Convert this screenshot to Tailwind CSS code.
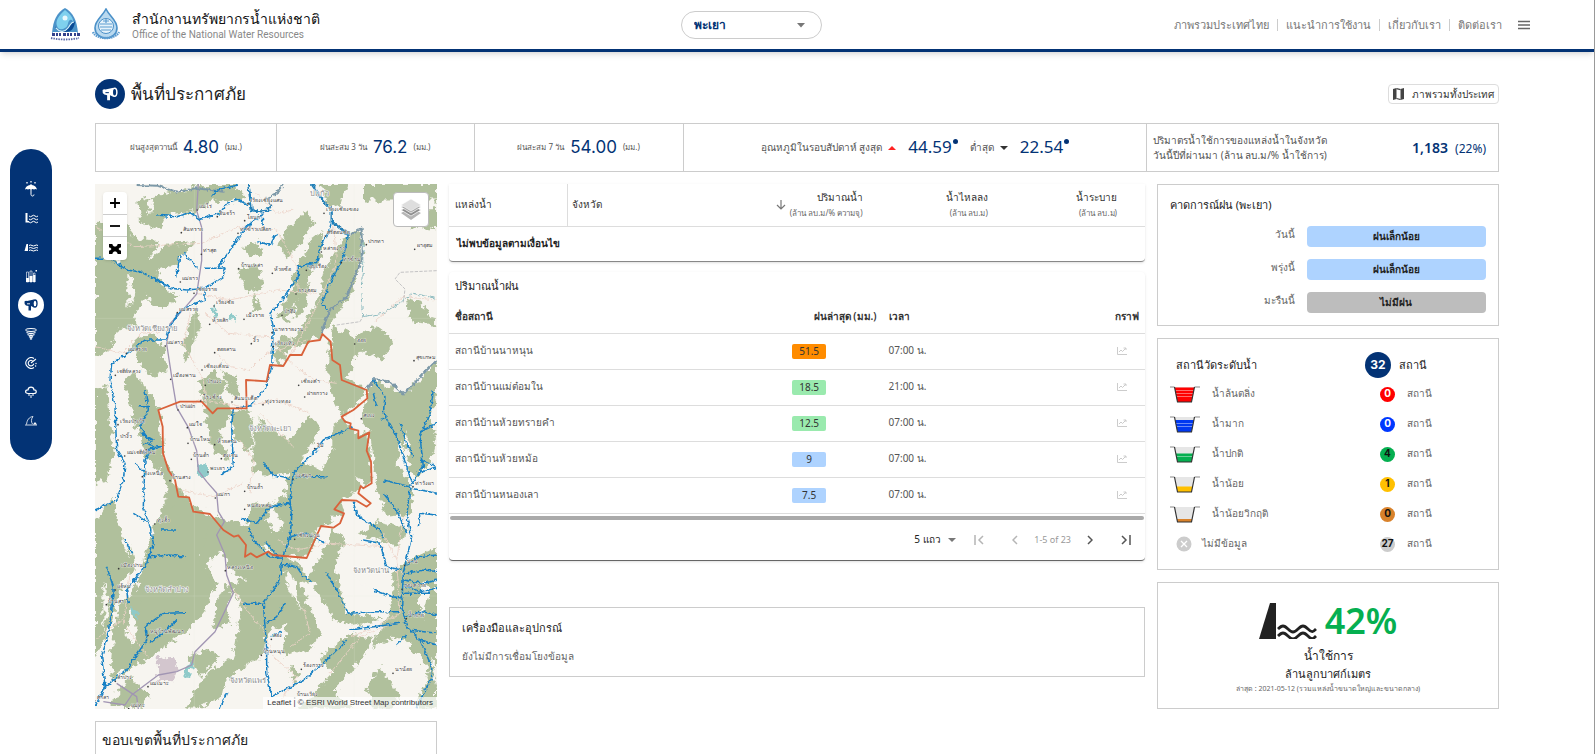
<!DOCTYPE html>
<html lang="th">
<head>
  <meta charset="UTF-8">
  <meta name="viewport" content="width=device-width, initial-scale=1.0">
  <title>สำนักงานทรัพยากรน้ำแห่งชาติ</title>
  <script src="https://cdn.jsdelivr.net/npm/@tailwindcss/browser@4"></script>
</head>
<body class="min-h-screen overflow-x-hidden border-r border-[#999] bg-white font-['Noto_Sans',sans-serif] text-xs text-[#333]">

  <!-- Header -->
  <header class="grid h-[52px] grid-cols-[631fr_142fr_708fr] items-center border-b-3 border-[#033375] pr-16 pl-[50px] shadow-md">
    <div class="flex items-center gap-3">
      <svg class="h-[33px] w-[30px]" viewBox="0 0 30 33">
        <path d="M15 0C7 4 3 13 2 25h26C27 13 23 4 15 0z" fill="#4c93c9"/>
        <path d="M15 2c-6 5-10 11-8 16 1 4 5 4 8 2 4-2 2-6 5-8 2-1 3 1 3 3 1-5-3-9-8-13z" fill="#7fd0ee"/>
        <path d="M5 18c2 6 9 7 13 2 3-3 4-7 7-6-1 7-4 10-10 10-6 0-9-2-10-6z" fill="#0a4a94"/>
        <path d="M6 20c4 5 9 4 12 0 3-4 3-6 6-6" fill="none" stroke="#d8f3fc" stroke-width="1.200"/>
        <circle cx="15" cy="10" r="2.500" fill="#e8f8fd"/>
        <path d="M3 24h24l2 4H1z" fill="#fff"/>
        <path d="M2 26.500h3m1 0h2m1 0h2m2 0h3m1 0h2m1 0h2m2 0h2m1 0h3" stroke="#33418c" stroke-width="3"/>
        <path d="M1 30c9 2 19 2 28 0" stroke="#5a68a8" stroke-width="1.800" stroke-dasharray="1.500 1" fill="none"/>
      </svg>
      <svg class="h-[33px] w-[28px]" viewBox="0 0 28 33">
        <path d="M14 1C10 9 3 12 3 20a11 10 0 0 0 22 0C25 12 18 9 14 1z" fill="#b9d9ef" stroke="#4a90c8" stroke-width="1.6"/>
        <circle cx="14" cy="18" r="7.500" fill="#e5f2fa" stroke="#4a90c8"/>
        <path d="M8 16h12M8 19h12M9 22h10M14 11v4m-3-2h6" stroke="#5a9bd0" stroke-width="1.2"/>
        <path d="M1 24c4 8 22 8 26 0" fill="none" stroke="#5a9bd0" stroke-width="2.500" stroke-dasharray="1.500 .7"/>
      </svg>
      <div>
        <h1 class="text-sm leading-5 text-[#111]">สำนักงานทรัพยากรน้ำแห่งชาติ</h1>
        <p class="font-['Roboto'] text-[10px] leading-3 text-[#888]">Office of the National Water Resources</p>
      </div>
    </div>
    <div class="relative">
      <select aria-label="จังหวัด" class="h-7 w-full appearance-none rounded-full border border-[#ccc] bg-white px-3 text-xs leading-5 font-semibold text-[#033375]">
        <option>พะเยา</option>
      </select>
      <svg class="pointer-events-none absolute top-3 right-4 h-[5px] w-2.5" viewBox="0 0 10 5"><path d="M1 0h8L5 4.500z" fill="#777"/></svg>
    </div>
    <nav class="flex items-center justify-end text-[11px] text-[#777]">
      <a href="#" class="border-r border-[#ccc] pr-2 leading-3">ภาพรวมประเทศไทย</a>
      <a href="#" class="border-r border-[#ccc] px-2 leading-3">แนะนำการใช้งาน</a>
      <a href="#" class="border-r border-[#ccc] px-2 leading-3">เกี่ยวกับเรา</a>
      <a href="#" class="pl-2 leading-3">ติดต่อเรา</a>
      <button aria-label="เมนู" class="ml-4">
        <svg class="h-3 w-3" viewBox="0 0 12 12"><path d="M0 2.500h12M0 6h12M0 9.500h12" stroke="#666" stroke-width="1.500"/></svg>
      </button>
    </nav>
  </header>

  <!-- Side menu -->
  <nav class="fixed top-[149px] left-2.5 z-10 flex w-[42px] flex-col items-center rounded-full bg-[#033375] py-[25px] text-white">
    <a href="#" aria-label="ฝน" class="flex h-[29px] items-center">
      <svg class="h-4 w-3.5" viewBox="0 0 14 16"><path d="M1 8.500C2 5 4.500 4 7 4s5 1 6 4.500c-1-.8-2-.8-3 0-1-.8-2-.8-3 0-1-.8-2-.8-3 0-1-.8-2-.8-3 0z" fill="currentColor"/><path d="M7 3v10.500c0 2 3 2 3 0" fill="none" stroke="currentColor"/><path d="M3 1v1.500M7 0v1.500M11 1v1.500" stroke="currentColor" stroke-width="1.300"/></svg>
    </a>
    <a href="#" aria-label="ระดับน้ำ" class="flex h-[29px] items-center">
      <svg class="h-3 w-3.5" viewBox="0 0 14 12"><path d="M1.500 1v9.500H5V9H3.500V1z" fill="currentColor"/><path d="M5 4q1.500 1.500 3 0t3 0 3 0M5 7q1.500 1.500 3 0t3 0 3 0M5 10q1.500 1.500 3 0t3 0 3 0" fill="none" stroke="currentColor"/></svg>
    </a>
    <a href="#" aria-label="เขื่อน" class="flex h-[29px] items-center">
      <svg class="h-3 w-3.5" viewBox="0 0 14 12"><path d="M2.500 3H4v7H.5z" fill="currentColor"/><path d="M5 4.500q1.500-1 3 0t3 0 3 0M5 7q1.500-1 3 0t3 0 3 0M5 9.500q1.500-1 3 0t3 0 3 0" fill="none" stroke="currentColor"/></svg>
    </a>
    <a href="#" aria-label="สถิติ" class="flex h-[29px] items-center">
      <svg class="h-3.5 w-3" viewBox="0 0 12 14"><path d="M1.500 3v10h2V3zM5 2v11h2V2zM8.500 4v9h1.500V4z" fill="none" stroke="currentColor" stroke-width=".6"/><path d="M1 9h3v4H1zM4.500 7h3v6h-3zM8.200 6h2.200v7H8.200zM10.500 1H12v1.500h-1.500z" fill="currentColor"/></svg>
    </a>
    <a href="#" aria-label="พื้นที่ประกาศภัย" class="flex h-[29px] items-center">
      <span class="flex size-[26px] items-center justify-center rounded-full bg-white text-[#033375]">
        <svg class="h-3 w-3.5" viewBox="0 0 14 12"><path d="M.5 2.500Q1.500 1.500 3 2l7-1.500v8L7 7v4.500H4.500V7L2 6.500Q0 5 .5 2.500z" fill="currentColor"/><ellipse cx="11" cy="4.500" rx="2" ry="3.500" fill="#fff" stroke="currentColor" stroke-width="1.300"/><path d="M3 4.800h3" stroke="#fff" stroke-width=".9"/></svg>
      </span>
    </a>
    <a href="#" aria-label="พายุ" class="flex h-[29px] items-center">
      <svg class="h-3 w-3" viewBox="0 0 12 12"><ellipse cx="6" cy="2" rx="5.500" ry="1.500" fill="none" stroke="currentColor"/><path d="M1.500 4.500q4.500 2 9 0M2.500 6.500q3.500 2 7 0M4 8.500q2 1.500 4 0M5 10.500q1 1 2 0" fill="none" stroke="currentColor" stroke-width="1.300"/></svg>
    </a>
    <a href="#" aria-label="เรดาร์" class="flex h-[29px] items-center">
      <svg class="size-3" viewBox="0 0 12 12"><path d="M9 1.500a5.300 5.300 0 1 0 0 9M7.500 3.700a2.800 2.800 0 1 0 1.300 3M6 6l5-4" fill="none" stroke="currentColor" stroke-width="1.100"/><circle cx="11" cy="6.500" r=".7" fill="currentColor"/><circle cx="10.600" cy="9" r=".7" fill="currentColor"/></svg>
    </a>
    <a href="#" aria-label="เมฆ" class="flex h-[29px] items-center">
      <svg class="size-3" viewBox="0 0 12 12"><path d="M3 7.500C-.3 7.500 0 3.700 3 3.800 3.500.3 8.500.3 9 3.800c3 0 3 3.700 0 3.700z" fill="none" stroke="currentColor" stroke-width="1.200"/><path d="M4 8v2M6 9v3M8 8v2" stroke="currentColor"/></svg>
    </a>
    <a href="#" aria-label="คลื่น" class="flex h-[29px] items-center">
      <svg class="size-3" viewBox="0 0 12 12"><path d="M0 10h12M1.500 9.500C2 5 4 2 8 1.500 6 4 6 7 7.500 9" fill="none" stroke="currentColor" stroke-width=".8"/><path d="M8 9.500l2-2.500 2 2.500z" fill="currentColor"/></svg>
    </a>
  </nav>

  <main class="px-[95px] pt-[27px]">
    <!-- Title row -->
    <div class="flex h-[30px] items-center justify-between">
      <h2 class="flex items-center gap-1.5 text-[17px] leading-6 text-[#222]">
        <span class="flex size-[30px] items-center justify-center rounded-full bg-[#033375] text-white">
          <svg class="h-3.5 w-4" viewBox="0 0 14 12"><path d="M.5 2.500Q1.500 1.500 3 2l7-1.500v8L7 7v4.500H4.500V7L2 6.500Q0 5 .5 2.500z" fill="currentColor"/><ellipse cx="11" cy="4.500" rx="2" ry="3.500" fill="#033375" stroke="currentColor" stroke-width="1.300"/><path d="M3 4.800h3" stroke="#033375" stroke-width=".9"/></svg>
        </span>
        พื้นที่ประกาศภัย
      </h2>
      <button class="flex h-5 items-center gap-2 rounded-sm border border-[#ddd] px-1 text-[10px] leading-4 text-[#333]">
        <svg class="h-3 w-[11px]" viewBox="0 0 11 12"><path d="M0 1l3.500-1v11L0 12zM7.500 1L11 0v11l-3.500 1z" fill="#444"/><path d="M3.500.7l4 1M3.500 10.500l4 1" stroke="#444" stroke-width="1.200"/></svg>
        ภาพรวมทั้งประเทศ
      </button>
    </div>

    <!-- Summary row -->
    <section class="mt-3.5 grid h-[49px] grid-cols-[181fr_198fr_209fr_464fr_351fr] divide-x divide-[#ccc] border border-[#ccc] text-[8px] text-[#555]">
      <div class="flex items-center justify-center gap-1.5">ฝนสูงสุดวานนี้ <b class="font-['Inter'] text-[17px] font-normal text-[#033375]">4.80</b> (มม.)</div>
      <div class="flex items-center justify-center gap-1.5">ฝนสะสม 3 วัน <b class="font-['Inter'] text-[17px] font-normal text-[#033375]">76.2</b> (มม.)</div>
      <div class="flex items-center justify-center gap-1.5">ฝนสะสม 7 วัน <b class="font-['Inter'] text-[17px] font-normal text-[#033375]">54.00</b> (มม.)</div>
      <div class="flex items-center justify-center gap-1.5 text-[10px]">
        อุณหภูมิในรอบสัปดาห์ สูงสุด
        <svg class="h-1 w-2" viewBox="0 0 8 4"><path d="M0 4h8L4 0z" fill="#f22"/></svg>
        <span class="ml-1.5 flex text-[17px] text-[#033375]">44.59<i class="mt-[3px] ml-px size-[5px] rounded-full bg-[#033375]"></i></span>
        <span class="ml-1.5">ต่ำสุด</span>
        <svg class="h-1 w-2" viewBox="0 0 8 4"><path d="M0 0h8L4 4z" fill="#333"/></svg>
        <span class="ml-1.5 flex text-[17px] text-[#033375]">22.54<i class="mt-[3px] ml-px size-[5px] rounded-full bg-[#033375]"></i></span>
      </div>
      <div class="flex items-center justify-between pr-3 pl-1.5">
        <p class="text-[10px] leading-[15px]">ปริมาตรน้ำใช้การของแหล่งน้ำในจังหวัด<br>วันนี้ปีที่ผ่านมา (ล้าน ลบ.ม/% น้ำใช้การ)</p>
        <p class="text-xs text-[#033375]"><b class="mr-1 text-sm font-semibold">1,183</b> (22%)</p>
      </div>
    </section>

    <div class="mt-3 grid grid-cols-4 gap-3">
      <!-- Left column -->
      <div class="flex flex-col gap-3">
        <div class="relative h-[525px] overflow-hidden bg-[#f7f5f0]">
          <svg class="size-full" viewBox="15 12 1026 1575" preserveAspectRatio="xMidYMid slice">
            <defs>
              <filter id="rough" x="0" y="0" width="100%" height="100%"><feTurbulence type="fractalNoise" baseFrequency=".05" numOctaves="4" seed="4"/><feDisplacementMap in="SourceGraphic" scale="34" xChannelSelector="R" yChannelSelector="G"/></filter>
              <filter id="wiggle" x="0" y="0" width="100%" height="100%"><feTurbulence type="fractalNoise" baseFrequency=".09" numOctaves="3" seed="9"/><feDisplacementMap in="SourceGraphic" scale="14" xChannelSelector="R" yChannelSelector="G"/></filter>
            </defs>
            <rect x="15" y="12" width="1026" height="1575" fill="#f7f5f0"/>
            <g filter="url(#rough)">
              <g fill="#b0c09c" transform="translate(-270 0) scale(1 1.021)">
                <path d="M415 60l65-15 120-25 40-8h60l40 38-50 15-50-5-50 35-90 5-20 50-60-30zM285 130l95-10 20 50 80 10-40 60 60-50 90-5-70 65-50 20 30 60 40 10-60 40-40-40-40 60 20 30-70 10-20 60-45 20z"/>
                <path d="M285 620l35-20 10 120 15 80-25 80-35 20zM375 600l25-40 30 40 50 80 10 120 40 100 30 30 40 50-40 120-20 80-100 80 40 30 60-20 30 60-140 50-30 50-70 40 10-140 20-90 40-20 30-100 20-70 50-120-30-80-40-50-30-100zM400 470l50-20 40 40 10 70-40 20-40-30zM285 1000l50-60 40 80 30 120-40 40-30 120-50 100z"/>
                <path d="M530 930l110 55 60 60 35 55 55 5 50 5-5 40-40 80-15 70-30-70-50-60-50-40-50-30 40 100-20 60-60 70-80 50-60 20-10-120 40-160zM600 590l40-30 40 40-20 40 40 40-40 70 30 80-50-30-20-80-10-60zM695 680l45-10 20 50-10 80-50-40zM550 480l40-110 10 50-20 70-25 50zM670 560l40 20 10 60-30-10z"/>
                <path d="M715 260l65-10 10 60-50 20zM860 140l60-50 20 40-40 60-40 40-20-30zM890 260l40-80 40-30-10 80-60 110-40 80-30-20 40-70zM730 200l40-20 20 30-40 20zM840 460l40 10-40 70-20-20zM760 330l20 50-20 10z"/>
                <path d="M970 270l60-100 50-20 10 70-40 120-30 40-30 50-30 25-40 25-60 20 40-60 40-60 20-50zM1095 12h216v48h-216zM960 12h80l-20 60-30 10zM1260 80h51v65l-80-10zM1215 345l45 15 51 70-71-10zM1000 430l60 30 70-30 50 40-30 60-70-30-40 80 60 35-30 50-45 25-25-50-20-80 10-60z"/>
                <path d="M1115 590l100 35 96-85v80l-21 80 21 50-21 80-50 50-40-120-10 80 40 50 10 90-80 10-30-90-20-160-30-40 20-60zM900 330l30-30-20 90-30 20z"/>
                <path d="M1030 700l45 50 30-10 10 150-40 20-55 30 10 40-70 40-40 90-80-5-70-45-30-50 20-60 40 10 50-30 20-70-70 10-40-20v-90l20-60 50 40 40 20 60-70 30 40-60 100 60 20 40-60v-70z"/>
                <path d="M635 985l115 35 50 70 40 10 60 30 20 40 40-60 40-80 40 30-40 70 40 140 110 20-90 20-60-20-60-100-40-10 60 150-20 40-90 30 10-100-60 30-10 70-90 50-50 80-60 23h-30l60-103 80-50 20-120-30-80 10 100-60 20 10-100-50-100z"/>
                <path d="M960 1400l100-70 60 20-60 90-60 60 60 53H900l100-103zM1180 1150l80-50 51-20v473h-61l40-113-50-60-40-40-80 30 60-130zM1100 1490l40-60 60 80-20 43h-60zM1070 1040l60-40 90 20-20 60-60-20zM870 1430l30 20-20 30z"/>
                <path d="M330 1540l60-80 60 60-30 33zM560 1400l60-20 40 20-60 60zM480 1380l-90 60-30-20 60-50z"/>
              </g>
              <g fill="#f7f5f0" transform="translate(-270 0) scale(1 1.021)">
                <path d="M670 1090l20 60 50 20-60 20-50 70 20-60-30-80zM345 960l20-100 20 100 5 150-20-40zM450 880l30-40 20 60-30 90-20-20zM390 1250l20 60-10 60-20-40zM310 1180l20 70-20 80zM820 950l30 70-30 20-20-40zM940 800l30-20 10 60-30 10zM850 1150l20 60 30 50-20-100zM1060 1050l30 60 30 90-40-10-30-80zM600 960l40 15-20 10z"/>
                <path d="M1070 870l30 20-20 30zM1215 740l20 60-20 30zM385 260l20 80-20 40zM440 60l20-5-10 50zM1270 1180l20 20-20 90-15-60zM1290 1400l21 30v60zM340 200l40 20-30 20zM700 1200l20 60-30 60-10-60z"/>
              </g>
              <path d="M200 1432l50-5 12 40-20 40-40-10z" fill="#d3c6ce"/>
              <g fill="#8fcac9"><path d="M325 850l20 0 12 25-18 15-18-12zM290 1455l18-10-8 45-18 0zM120 1280l20 10 8 30-20-20zM430 395l10 30-20-5zM370 380l12 15-2 20-14-12z"/></g>
            </g>
            <!-- Roads -->
            <g fill="none" stroke="#edd3c8" stroke-width="2.500" filter="url(#wiggle)">
              <path d="M15 140l120 60 200-10 110-50 120 10M320 340l100 20 140-30 120 10M345 400l70 60 120 10 70 80M15 500l80 20 60-60 80-10M380 520l40 40 60 10 50-50 120-40M730 130l10 120-60 130-80 150M260 680l80-20 120 20 100-20 100 40M300 400l-20 90 60 110 10 80M560 150l60 110 5 80M610 800l-100-100M850 430l90-80 100 10M270 930l100 20 90-40M410 1200l60 90 50 60 30 80 70 60-60 90M560 1080l60 30 100-20 160 10M940 1010l-20 130 10 160-70 40-80 30M880 1060l60 130M120 1180l-20 150 80 110M720 1480l90-110 100-40M600 1400l60-40-20-80M500 40l60 60 50-10M620 560l50 40 70 10M15 1380l80-60M450 780l40 60-10 100"/>
            </g>
            <path d="M325 12l-5 80 15 50v100l-15 100-30 35-50 55-10 60 20 130 10 60 35 60 25 70 5 60 25 33 30 34 5 56 18 30-23 40 25 60 5 60 20 55-55 115-60 60-10 40-45 20-55 10-80 60-20 30-65-10M80 1510l60 40 5 37" fill="none" stroke="#a195b3" stroke-width="4" stroke-linejoin="round"/>
            <g stroke="#e8ecdf" opacity=".5"><path d="M313 12v1575M793 12v1575M15 415h1026M15 1248h1026"/></g>
            <path d="M1040 272l-110 5-15 20 30 30-5 40M740 435l70-10 10-18" fill="none" stroke="#a9a9ad" stroke-width="2" stroke-dasharray="10 4"/>
            <path d="M820 180l-2 80-5 80 5 70 60-10 50-30 40-30 70 15" fill="none" stroke="#8fbcc0" stroke-width="3" filter="url(#wiggle)"/>
            <!-- Rivers -->
            <g fill="none" stroke-linejoin="round" filter="url(#wiggle)">
              <path d="M140 15l60 2 60 18 60-10 80 10M545 75l-15-20 30-15 20-28M725 125l55 40 35-20v95l-45 110-50 40-20 50-5 20M830 625l25-28 45 8 40 38 60-62 41-41" stroke="#7d99a8" stroke-width="6"/>
              <path d="M475 12l10 78 20 5 30-3 10-17M665 12l25 38 35 40v35l50 40" stroke="#2380b8" stroke-width="7"/>
              <g stroke="#1680c4" stroke-width="4.500">
                <path d="M15 235h45l50 35 40 5 50 25 45 25 45 5 55-5 55-35 5-25-20-5 25-35 30-45 30-40 50-40M200 105l60 5 40-12 30 20 60-18 20-30 30-12 35 17M345 325v35l-45 15-35 25-25 40-12 40h-63l-60 45-40 25-5 50 15 80 5 130 25 40-5 50-20 60-65 30M270 225l-10 65M280 220l45 45M365 50l15-20 65-15M515 100l5 35M505 185l35 10 20-35M345 265h50"/>
                <path d="M725 125l-10 35-25 40-10 50-55 10v30l-55 80-30 30 10 40-5 120-20 70-50 50-45 5-5 55 5 120-40 25M775 165l-15 65-40 80-25 60 17 20M850 600l35 50-5 50 40 70 20 60 25 75M1030 630l-10 70-30 70 10 90-40 60-10 90 15 60-25 110-5 100 15 60 40 40 35 80v35l-45 87M790 740l-90 40-30 40-60 60-10 80 5 50-5 60-25 70-5 60-50 70 5 70 5 60v80l15 70 95-50 70-60 60-60"/>
                <path d="M165 630l10 60-25 50 40 60-25 40-5 140 20 60 10 50-20 60-60 80 5 40M145 680h35M155 760l35 20M160 790l55 10M150 820l60-20M135 850l30 30M130 1000l40 25M210 1050h45M180 1130l60-5 45 7M50 1160l20 60-5 80-15 80-15 50 10 90-30 60M45 1520l65-50 60-90-5-40 55-40 65-2M180 1390l60-50 20-20M105 1080l20 40M455 1015l45 15 40-50 60-10M475 1040l15 40 50 50 35 5M520 850l30 35 50 10M620 890h90M600 1070l50-10 55 30M570 1150l50 10 20 30 25 15M460 1270h60M530 1330l30-20 25-40M525 1085l35 40M390 1587l20-50M545 1370l30-15"/>
                <path d="M790 965l10 40 70 45 10 25M710 1180l30 50 35 70 75-5h80M880 940l40 50 30 70M880 900l80 20M820 1080l50 10 20 70 45 10M780 1350l70-10 80-10M945 1160l40-30 56-5M945 1180l60-10 36 5M940 1200l60 10 41-10M940 1215l50 20 51-10M940 1240h80M850 1230l60 20 30 5M940 1310l60-15 41 10M955 1350l86 10M990 1380l51 15M920 1395l30-30M985 1040l5-40 51 5M965 925l76 15M990 840l50 20M1000 750l41-20M860 680l-10-40M870 720l20-10M930 730l20 60 20 40M980 881l61-20"/>
              </g>
            </g>
            <!-- Province boundary -->
            <path d="M205 690L270 665L335 665L368 700L382 685L430 685L470 685L468 600L530 604L540 555L580 558L600 525L635 525L655 485L690 480L697 462L722 485L727 540L750 555L755 600L830 630L832 655L790 690L755 710L765 725L782 730L780 745L805 752L805 775L838 757L830 812L843 845L845 910L820 925L812 918L805 940L842 970L830 980L800 962L755 960L733 988L762 1000L750 1030L730 1043L693 1038L650 1134L548 1125L535 1115L500 1132L482 1120L465 1130L468 1095L445 1066L432 1070L400 1050L360 1002L310 995L297 952L265 950L255 900L235 870L219 820L218 740Z" fill="none" stroke="#d9623b" stroke-width="5.500" stroke-linejoin="round"/>
            <!-- Town names -->
            <g id="towns" class="font-['Noto_Sans',sans-serif] text-[16px]" fill="#3a3a3a" stroke="#fff" stroke-width="2" paint-order="stroke"></g>
            <g class="font-['Noto_Sans',sans-serif] text-[23px] font-medium" fill="#8b8b8b" stroke="#fff" stroke-width="3" paint-order="stroke">
              <text x="660" y="48">บ่แก้ว</text>
              <text x="112" y="453">จังหวัดเชียงราย</text>
              <text x="478" y="754">จังหวัดพะเยา</text>
              <text x="166" y="1236">จังหวัดลำปาง</text>
              <text x="788" y="1179">จังหวัดน่าน</text>
              <text x="420" y="1510">จังหวัดแพร่</text>
            </g>
          </svg>
          <div class="absolute top-2 left-2 flex w-6 flex-col divide-y divide-[#ccc] rounded-sm bg-white shadow">
            <button aria-label="Zoom in" class="flex h-[23px] items-center justify-center"><svg class="size-2.5" viewBox="0 0 10 10"><path d="M5 0v10M0 5h10" stroke="#000" stroke-width="1.800"/></svg></button>
            <button aria-label="Zoom out" class="flex h-[22px] items-center justify-center"><svg class="size-2.5" viewBox="0 0 10 10"><path d="M0 5h10" stroke="#000" stroke-width="1.800"/></svg></button>
            <button aria-label="Full screen" class="flex h-[23px] items-center justify-center"><svg class="size-3" viewBox="0 0 12 12"><path d="M0 1h3.500v1L5 3.500h2L8.500 2V1H12v3.500h-1L9.500 6 11 7.500h1V11H8.500v-1L7 8.500H5L3.500 10v1H0V7.500h1L2.500 6 1 4.500H0z" fill="#000"/></svg></button>
          </div>
          <button aria-label="Layers" class="absolute top-2 right-2 flex h-[35px] w-9 items-center justify-center rounded border border-[#bbb] bg-white">
            <svg class="h-[23px] w-5" viewBox="0 0 20 23"><path d="M0 15l10 7 10-7-10-5z" fill="#b5b5b5"/><path d="M0 12l10 6 10-6-10-5z" fill="#8f8f8f" stroke="#fff" stroke-width=".7"/><path d="M0 9l10 6 10-6-10-5z" fill="#a8a8a8" stroke="#fff" stroke-width=".7"/><path d="M0 7l10 6 10-6-10-6z" fill="#dedede" stroke="#fff" stroke-width=".5"/></svg>
          </button>
          <p class="absolute right-0 bottom-0 bg-white/70 px-1 font-['Liberation_Sans'] text-[8px] leading-3 text-[#333]"><a href="#">Leaflet</a> | © ESRI World Street Map contributors</p>
        </div>
        <section class="h-24 border border-[#ccc] px-1.5 py-2">
          <h3 class="text-sm leading-5 font-medium text-[#222]">ขอบเขตพื้นที่ประกาศภัย</h3>
        </section>
      </div>

      <!-- Middle column -->
      <div class="col-span-2">
        <div class="rounded-b border-b border-[#888] shadow-sm">
          <table class="w-full table-fixed text-left text-[10px]">
            <colgroup><col class="w-[17%]"><col class="w-[23%]"><col class="w-[20%]"><col class="w-[18%]"><col class="w-[22%]"></colgroup>
            <thead>
              <tr class="h-[42px] border-b border-[#ddd] leading-[15px]">
                <th class="border-r border-[#ddd] px-1.5 font-medium">แหล่งน้ำ</th>
                <th class="px-1 font-medium">จังหวัด</th>
                <th class="pr-1 text-right font-medium">
                  <span class="flex items-center justify-end gap-1">
                    <svg class="size-2.5" viewBox="0 0 10 10"><path d="M5 0v9M1 5l4 4 4-4" fill="none" stroke="#777" stroke-width="1.200"/></svg>
                    <span>ปริมาณน้ำ<br><small class="text-[8px] font-normal text-[#666]">(ล้าน ลบ.ม/% ความจุ)</small></span>
                  </span>
                </th>
                <th class="pr-1 text-right font-medium">น้ำไหลลง<br><small class="text-[8px] font-normal text-[#666]">(ล้าน ลบ.ม)</small></th>
                <th class="pr-7 text-right font-medium">น้ำระบาย<br><small class="text-[8px] font-normal text-[#666]">(ล้าน ลบ.ม)</small></th>
              </tr>
            </thead>
            <tbody>
              <tr class="h-[35px]"><td colspan="5" class="px-2 font-semibold text-[#222]">ไม่พบข้อมูลตามเงื่อนไข</td></tr>
            </tbody>
          </table>
        </div>

        <div class="mt-2.5 rounded border-b border-[#666] shadow">
          <h3 class="px-1.5 pt-1 text-[11px] leading-5 text-[#222]">ปริมาณน้ำฝน</h3>
          <table class="w-full table-fixed text-left text-[10px]">
            <colgroup><col class="w-[46%]"><col class="w-[16%]"><col class="w-[18%]"><col class="w-[20%]"></colgroup>
            <thead>
              <tr class="h-[37px] border-b border-[#ddd] text-[#333]">
                <th class="px-1.5 pt-1 font-semibold">ชื่อสถานี</th>
                <th class="pt-1 pr-1 text-right font-semibold whitespace-nowrap">ฝนล่าสุด (มม.)</th>
                <th class="px-2 pt-1 font-semibold">เวลา</th>
                <th class="px-1.5 pt-1 text-right font-semibold">กราฟ</th>
              </tr>
            </thead>
            <tbody id="stations" class="text-[#555]"></tbody>
          </table>
          <div class="mx-px mt-0.5 h-1 rounded-full bg-[#aaa]"></div>
          <div class="flex h-10 items-center justify-end pr-3.5 text-[#222]">
            <div class="relative">
              <select aria-label="แถวต่อหน้า" class="h-5 w-11 appearance-none bg-transparent text-[10px]"><option>5 แถว</option></select>
              <svg class="pointer-events-none absolute top-2 right-0.5 h-1 w-2" viewBox="0 0 8 4"><path d="M0 0h8L4 4z" fill="#777"/></svg>
            </div>
            <button aria-label="หน้าแรก" class="ml-4"><svg class="h-2.5 w-2.5" viewBox="0 0 10 10"><path d="M1 0v10M9 1L5 5l4 4" fill="none" stroke="#b5b5b5" stroke-width="1.500"/></svg></button>
            <button aria-label="ก่อนหน้า" class="ml-7"><svg class="h-2.5 w-1.5" viewBox="0 0 6 10"><path d="M5 1L1 5l4 4" fill="none" stroke="#b5b5b5" stroke-width="1.500"/></svg></button>
            <span class="mx-4 text-[9px] text-[#999]">1-5 of 23</span>
            <button aria-label="ถัดไป" class="mr-7"><svg class="h-2.5 w-1.5" viewBox="0 0 6 10"><path d="M1 1l4 4-4 4" fill="none" stroke="#555" stroke-width="1.500"/></svg></button>
            <button aria-label="หน้าสุดท้าย"><svg class="h-2.5 w-2.5" viewBox="0 0 10 10"><path d="M9 0v10M1 1l4 4-4 4" fill="none" stroke="#555" stroke-width="1.500"/></svg></button>
          </div>
        </div>

        <section class="mt-[46px] h-[70px] border border-[#ccc] px-3 py-2.5">
          <h3 class="text-[11px] leading-5 text-[#222]">เครื่องมือและอุปกรณ์</h3>
          <p class="mt-2 text-[10px] leading-5 text-[#666]">ยังไม่มีการเชื่อมโยงข้อมูล</p>
        </section>
      </div>

      <!-- Right column -->
      <div class="flex flex-col gap-3">
        <section class="h-[142px] border border-[#ccc] pt-2.5 pr-3 pl-3">
          <h3 class="text-[11px] leading-5 text-[#222]">คาดการณ์ฝน (พะเยา)</h3>
          <dl class="mt-[11px] grid grid-cols-[125fr_180fr] gap-x-3 gap-y-3 text-[10px] leading-[21px]">
            <dt class="h-[21px] text-right leading-4 text-[#666]">วันนี้</dt>
            <dd class="rounded bg-[#aed3ff] text-center font-semibold text-[#222]">ฝนเล็กน้อย</dd>
            <dt class="h-[21px] text-right leading-4 text-[#666]">พรุ่งนี้</dt>
            <dd class="rounded bg-[#aed3ff] text-center font-semibold text-[#222]">ฝนเล็กน้อย</dd>
            <dt class="h-[21px] text-right leading-4 text-[#666]">มะรืนนี้</dt>
            <dd class="rounded bg-[#bdbdbd] text-center font-semibold text-[#222]">ไม่มีฝน</dd>
          </dl>
        </section>

        <section class="h-[232px] border border-[#ccc] pt-3">
          <div class="flex h-7 items-center text-[11px] text-[#222]">
            <h3 class="w-[207px] pl-[18px]">สถานีวัดระดับน้ำ</h3>
            <b class="mr-2 flex size-[26px] items-center justify-center rounded-full bg-[#033375] font-['Inter'] text-xs text-white">32</b>
            <span>สถานี</span>
          </div>
          <ul id="levels" class="text-[10px] text-[#666]"></ul>
        </section>

        <section class="flex h-[127px] flex-col items-center border border-[#ccc] pt-3">
          <div class="flex items-center gap-2">
            <svg class="h-9 w-[58px]" viewBox="0 0 58 36"><path d="M0 36L11 0h6v36z" fill="#222"/><path d="M19 27c4-4 6-4 10 0s6 4 10 0 6-4 10 0 5 3 8 0M19 34c4-4 6-4 10 0s6 4 10 0 6-4 10 0 5 3 8 0" transform="translate(0 -1)" fill="none" stroke="#222" stroke-width="2.800"/></svg>
            <strong class="text-4xl leading-[52px] font-semibold text-[#05af50]">42%</strong>
          </div>
          <p class="text-xs leading-[18px] text-[#222]">น้ำใช้การ</p>
          <p class="text-[11px] leading-[18px] text-[#222]">ล้านลูกบาศก์เมตร</p>
          <p class="text-[7px] leading-3 text-[#666]">ล่าสุด : 2021-05-12 (รวมแหล่งน้ำขนาดใหญ่และขนาดกลาง)</p>
        </section>
      </div>
    </div>
  </main>

  <script>
    const stations = [
      ["สถานีบ้านนาหนุน", "51.5", "07:00 น.", "bg-[#ff8c00]"],
      ["สถานีบ้านแม่ต๋อมใน", "18.5", "21:00 น.", "bg-[#9aeaae]"],
      ["สถานีบ้านห้วยทรายคำ", "12.5", "07:00 น.", "bg-[#9aeaae]"],
      ["สถานีบ้านห้วยหม้อ", "9", "07:00 น.", "bg-[#aed3ff]"],
      ["สถานีบ้านหนองเลา", "7.5", "07:00 น.", "bg-[#aed3ff]"]
    ];
    document.getElementById("stations").innerHTML = stations.map(([name, rain, time, color]) => `
      <tr class="h-9 border-b border-[#ddd]">
        <td class="px-1.5">${name}</td>
        <td><span class="ml-[23px] block h-[15px] w-[34px] rounded-xs text-center leading-[15px] text-[#333] ${color}">${rain}</span></td>
        <td class="px-2">${time}</td>
        <td><svg class="mr-[18px] ml-auto h-2 w-2.5" viewBox="0 0 10 8"><path d="M.5 0v7.500H10M2 5l2-2 1.500 1.500L9 1M6.500 1H9v2" fill="none" stroke="#ccc"/></svg></td>
      </tr>`).join("");

    // [label, count, water colour, water top, badge classes]
    const levels = [
      ["น้ำล้นตลิ่ง", 0, "#ff0000", 1.5, "bg-[#ff0000] text-white"],
      ["น้ำมาก", 0, "#0038f0", 4, "bg-[#0038ff] text-white"],
      ["น้ำปกติ", 4, "#05af50", 7.5, "bg-[#05af50] text-[#111]"],
      ["น้ำน้อย", 1, "#ffc000", 10.5, "bg-[#ffc000] text-[#111]"],
      ["น้ำน้อยวิกฤติ", 0, "#d9822b", 13, "bg-[#d9822b] text-[#111]"],
      ["ไม่มีข้อมูล", 27, "", 0, "bg-[#ccc] text-[#111]"]
    ];
    document.getElementById("levels").innerHTML = levels.map(([label, count, color, top, badge]) => {
      // side walls lean in by 0.2 per unit of depth
      const lean = (top - 1) * 0.2;
      const lines = [4.5, 7.5, 10.5].filter((y) => y > top + 1).map((y) => `M6 ${y}h17`).join("");
      const icon = color
        ? `<svg class="mr-3 h-[17px] w-[30px]" viewBox="0 0 30 17">
            <path d="M4.500 1h20l-3 15h-14z" fill="#e6e6e6"/>
            <path d="M${4.5 + lean} ${top}H${24.5 - lean}L21.500 16h-14z" fill="${color}"/>
            <path d="${lines}" stroke="#fff" stroke-width=".7" opacity=".6"/>
            <path d="M0 1h4.500M24.500 1H30" stroke="#888" stroke-width="1.200"/>
            <path d="M4.500 1l3 15h14l3-15" fill="none" stroke="#333" stroke-width="1.200"/>
          </svg>`
        : `<svg class="mr-2.5 ml-1.5 size-4" viewBox="0 0 16 16"><circle cx="8" cy="8" r="7.500" fill="#ccc"/><path d="M5 5l6 6M11 5l-6 6" stroke="#fff" stroke-width="1.300"/></svg>`;
      return `<li class="flex h-[30px] items-center pl-3">
        <span class="flex w-[210px] items-center">${icon}${label}</span>
        <b class="mr-3 flex size-[15px] items-center justify-center rounded-full font-['Inter'] text-[10px] ${badge}">${count}</b>
        <span>สถานี</span>
      </li>`;
    }).join("");

    const towns = [
      [480, 65, "เวียงเชียงแสน"], [328, 84, "แม่ไร่"], [388, 104, "จันจว้า"], [470, 116, "โยนก"], [280, 152, "สันทราย"],
      [450, 154, "ท่าข้าวเปลือก"], [708, 94, "เวียงเชียงของ"], [712, 162, "ศรีดอนชัย"], [835, 188, "ปากทา"], [980, 202, "ผาอุดม"],
      [340, 217, "ท่าสุด"], [700, 210, "หล่ายงาว"], [760, 242, "ท่าข้าม"], [452, 260, "บ้านเหล่า"], [553, 274, "ห้วยซ้อ"],
      [655, 265, "บุญเรือง"], [277, 300, "แม่ยาว"], [318, 334, "เชียงราย"], [624, 336, "ยางฮอม"], [378, 372, "เวียงชัย"],
      [268, 392, "แม่สรวย"], [468, 412, "เม็งราย"], [582, 400, "ป่าตึง"], [365, 427, "ห้วยสัก"], [552, 452, "นาทรายงาม"],
      [232, 492, "แม่ลาว"], [556, 494, "เวียงเทิง"], [490, 485, "งิ้ว"], [800, 486, "ออย"], [115, 514, "แม่สรวย"],
      [380, 512, "ดอยลาน"], [342, 564, "เชียงเคี่ยน"], [82, 580, "เจดีย์หลวง"], [248, 592, "เมืองพาน"], [352, 610, "ป่าแงะ"],
      [632, 610, "เชียงคำ"], [978, 536, "สุขเกษม"], [338, 657, "โรงช้าง"], [432, 660, "สันมะเค็ด"], [525, 668, "ทุ่งรวงทอง"],
      [650, 645, "ฝายกวาง"], [270, 684, "ป่าแฝก"], [298, 737, "แม่ใจ"], [90, 728, "เวียงป่าเป้า"], [300, 784, "บ้านใหม่"],
      [90, 774, "ป่างิ้ว"], [380, 788, "ห้วยลาน"], [820, 710, "สบบง"], [110, 822, "แม่เจดีย์ใหม่"], [310, 832, "บ้านต๋ำ"],
      [400, 830, "ดงเจน"], [163, 884, "วังเหนือ"], [360, 870, "พะเยา"], [246, 896, "บ้านสาง"], [615, 892, "ปงสนุก"],
      [470, 928, "บ้านถ้ำ"], [382, 948, "แม่กา"], [470, 982, "หนองหล่ม"], [975, 914, "ท่าวังผา"], [200, 1026, "ทุ่งฮั้ว"],
      [620, 1072, "เชียงม่วน"], [92, 1160, "เมืองปาน"], [412, 1166, "หลวงเหนือ"], [950, 1150, "น่าน"], [82, 1224, "แจ้ห่ม"],
      [942, 1222, "กองควาย"], [55, 1268, "บ้านสา"], [180, 1360, "หมู่บ้านพัฒนา"], [550, 1372, "สอง"], [520, 1420, "บ้านหนุน"],
      [640, 1462, "ร้องกวาง"], [915, 1474, "นาน้อย"], [82, 1498, "ลำปาง"], [180, 1514, "แม่เมาะ"], [620, 1548, "บ้านเวียง"],
      [20, 1556, "ศาลา"], [122, 1580, "แม่ทะ"], [955, 1310, "น้ำปาย"], [680, 800, "งิม"]
    ];
    document.getElementById("towns").innerHTML = towns.map(([x, y, name]) =>
      `<circle cx="${x - 6}" cy="${y + 6}" r="2.500" stroke="none"/><text x="${x}" y="${y}">${name}</text>`
    ).join("");
  </script>
</body>
</html>
